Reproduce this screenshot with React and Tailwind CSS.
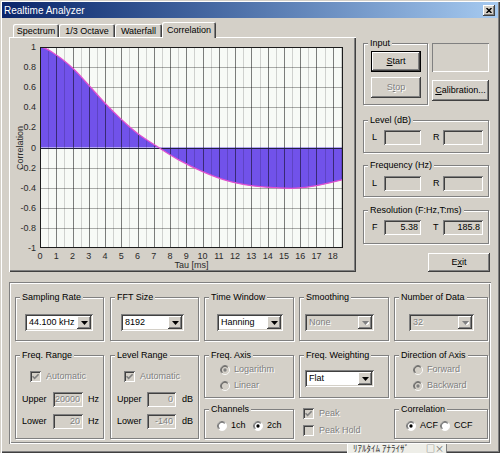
import React from 'react';

const raised =
  'bg-[#d4d0c8] shadow-[inset_-1px_-1px_#404040,inset_1px_1px_#fff,inset_-2px_-2px_#808080,inset_2px_2px_#d4d0c8]';
const sunken =
  'shadow-[inset_1px_1px_#808080,inset_-1px_-1px_#fff,inset_2px_2px_#404040,inset_-2px_-2px_#d4d0c8]';
const etched = 'border border-[#808080] shadow-[1px_1px_0_#fff,inset_1px_1px_0_#fff]';
const dis = 'text-[#808080] [text-shadow:1px_1px_0_#fff]';

// chart geometry, in page pixels
const X0 = 40;
const PX = 16.26;
const TMAX = 18.63;
const Y0 = 147.5;
const xOf = (t) => X0 + t * PX;
const yOf = (v) => Y0 - v * 100.5;

const KNOTS = [
  [0, 1], [1, 0.92], [2, 0.79], [3, 0.62], [4, 0.44], [5, 0.28], [6, 0.14], [7.3, 0],
  [8.5, -0.12], [10, -0.24], [11.5, -0.33], [13, -0.38], [14.5, -0.4], [15.7, -0.405],
  [17, -0.38], [18.63, -0.32],
];

function curvePath() {
  const p = KNOTS.map(([t, v]) => [xOf(t), yOf(v)]);
  let d = `M${p[0][0]},${p[0][1]}`;
  for (let i = 0; i < p.length - 1; i++) {
    const p0 = i === 0 ? [2 * p[0][0] - p[1][0], p[1][1]] : p[i - 1];
    const p1 = p[i];
    const p2 = p[i + 1];
    const p3 = p[i + 2] || p2;
    const c1 = [p1[0] + (p2[0] - p0[0]) / 6, p1[1] + (p2[1] - p0[1]) / 6];
    const c2 = [p2[0] - (p3[0] - p1[0]) / 6, p2[1] - (p3[1] - p1[1]) / 6];
    d += ` C${c1[0].toFixed(2)},${c1[1].toFixed(2)} ${c2[0].toFixed(2)},${c2[1].toFixed(2)} ${p2[0].toFixed(2)},${p2[1].toFixed(2)}`;
  }
  return d;
}

const Y_LABELS = ['1', '0.8', '0.6', '0.4', '0.2', '0', '-0.2', '-0.4', '-0.6', '-0.8', '-1'];

function Chart() {
  const curve = curvePath();
  const fill = `${curve} L${xOf(TMAX)},${Y0} L${X0},${Y0} Z`;
  const snap = (n) => Math.round(n) + 0.5;
  const halfs = [];
  for (let i = 1; i < 38; i++) halfs.push(i / 2);

  return (
    <svg width="347" height="235" viewBox="9 37 347 235" className="block">
      <defs>
        <clipPath id="plot">
          <rect x="40" y="47" width="303" height="201" />
        </clipPath>
      </defs>
      <rect x="40" y="47" width="303" height="201" fill="#f7faf6" />
      <g clipPath="url(#plot)">
        {[0.8, 0.6, 0.4, 0.2, -0.2, -0.4, -0.6, -0.8].map((v) => (
          <line key={v} x1="40" x2="343" y1={snap(yOf(v))} y2={snap(yOf(v))} stroke="#a9aba8" />
        ))}
        <path d={fill} fill="#7152ea" />
        {halfs.map((t) => (
          <line
            key={t}
            x1={snap(xOf(t))}
            x2={snap(xOf(t))}
            y1="47"
            y2="248"
            stroke="#000"
            strokeOpacity={t % 1 === 0 ? 0.5 : 0.16}
          />
        ))}
        <line x1="40" x2="343" y1={snap(Y0)} y2={snap(Y0)} stroke="#202040" />
        <path d={curve} fill="none" stroke="#e050d0" strokeWidth="1.3" />
      </g>
      <rect x="40.5" y="47.5" width="302" height="200" fill="none" stroke="#1c1c1c" />
      <g fontFamily="'Liberation Sans', Arial, sans-serif" fontSize="9" fill="#2a2a2a">
        {Y_LABELS.map((l, i) => (
          <text key={l} x="36" y={yOf(1 - i * 0.2) + 3} textAnchor="end">
            {l}
          </text>
        ))}
        {Array.from({ length: 19 }, (_, i) => (
          <text key={i} x={xOf(i)} y="258.5" textAnchor="middle">
            {i}
          </text>
        ))}
        <text x="191.5" y="268" textAnchor="middle">Tau [ms]</text>
        <text transform="translate(23,148) rotate(-90)" textAnchor="middle">Correlation</text>
      </g>
    </svg>
  );
}

function Group({ label, className = '', children }) {
  return (
    <fieldset className={`${etched} min-w-0 ${className}`}>
      <legend className="ml-[4px] px-[2px] bg-[#d4d0c8] leading-[12px]">{label}</legend>
      {children}
    </fieldset>
  );
}

function Arrow({ disabled }) {
  return (
    <svg width="7" height="4" viewBox="0 0 7 4" className="block">
      {disabled && <polygon points="1,1 8,1 4.5,5" fill="#fff" />}
      <polygon points="0,0 7,0 3.5,4" fill={disabled ? '#808080' : '#000'} />
    </svg>
  );
}

function Combo({ value, disabled, className = '' }) {
  return (
    <div className={`flex h-[17px] p-[2px] ${sunken} ${disabled ? 'bg-[#d4d0c8]' : 'bg-white'} ${className}`}>
      <div className={`flex-1 pl-[2px] leading-[13px] ${disabled ? dis : 'text-black'}`}>{value}</div>
      <div className={`w-[14px] flex items-center justify-center ${raised}`}>
        <Arrow disabled={disabled} />
      </div>
    </div>
  );
}

function Check({ checked, disabled, label, className = '' }) {
  return (
    <div className={`flex items-center h-[11px] ${className}`}>
      <div className={`w-[11px] h-[11px] flex items-center justify-center ${sunken} ${disabled ? 'bg-[#d4d0c8]' : 'bg-white'}`}>
        {checked && (
          <svg width="7" height="7" viewBox="0 0 7 7" className="block">
            <path d="M0.5 3.2 L2.6 5.3 L6.6 1.2" fill="none" stroke={disabled ? '#808080' : '#000'} strokeWidth="1.6" />
          </svg>
        )}
      </div>
      <span className={`ml-[5px] ${disabled ? dis : ''}`}>{label}</span>
    </div>
  );
}

function Radio({ checked, disabled, label, className = '' }) {
  return (
    <div className={`flex items-center h-[16px] ${className}`}>
      <svg width="10" height="10" viewBox="0 0 12 12" className="block shrink-0">
        <circle cx="6" cy="6" r="5.5" fill={disabled ? '#d4d0c8' : '#fff'} />
        <path d="M2.1 9.9 A5.5 5.5 0 0 1 9.9 2.1" stroke="#808080" fill="none" />
        <path d="M9.9 2.1 A5.5 5.5 0 0 1 2.1 9.9" stroke="#fff" fill="none" />
        <path d="M2.8 9.2 A4.5 4.5 0 0 1 9.2 2.8" stroke="#404040" fill="none" />
        {checked && <circle cx="6" cy="6" r="2" fill={disabled ? '#808080' : '#000'} />}
      </svg>
      <span className={`ml-[4px] ${disabled ? dis : ''}`}>{label}</span>
    </div>
  );
}

function Btn({ children, className = '', def, disabled }) {
  return (
    <div
      className={`flex items-center justify-center ${raised} ${def ? 'outline outline-1 outline-black -outline-offset-1 shadow-[inset_-2px_-2px_#404040,inset_2px_2px_#fff,inset_-3px_-3px_#808080]' : ''} ${disabled ? dis : ''} ${className}`}
    >
      {children}
    </div>
  );
}

function Field({ value, className = '', disabled }) {
  return (
    <div className={`h-[15px] bg-[#d4d0c8] ${sunken} text-right pr-[3px] leading-[15px] ${disabled ? dis : ''} ${className}`}>
      {value}
    </div>
  );
}

function Tab({ children, w, selected }) {
  return (
    <div
      className={`${w} rounded-t-[2px] bg-[#d4d0c8] text-center leading-[12px] ${
        selected
          ? 'relative z-10 h-[16px] -mb-[1px] pt-[2px] shadow-[inset_1px_1px_#fff,inset_-1px_0_#404040,inset_-2px_0_#808080]'
          : 'h-[13px] pt-[1px] shadow-[inset_1px_1px_#fff,inset_-1px_0_#404040,inset_-2px_0_#808080]'
      }`}
    >
      {children}
    </div>
  );
}

export default function App() {
  return (
    <div className="relative w-[500px] h-[453px] overflow-hidden bg-[#d4d0c8] p-[2px] text-[9px] text-black font-['Liberation_Sans',Arial,sans-serif] shadow-[inset_1px_1px_#d4d0c8,inset_2px_2px_#fff,inset_-1px_-1px_#404040,inset_-2px_-2px_#808080]">
      {/* title bar */}
      <div className="h-[16px] flex items-center justify-between bg-linear-to-r from-[#0a246a] to-[#a6caf0]">
        <span className="pl-[2px] text-white text-[10px]">Realtime Analyzer</span>
        <div className={`mr-[3px] w-[12px] h-[11px] flex items-center justify-center ${raised}`}>
          <svg width="6" height="5" viewBox="0 0 6 5" className="block">
            <path d="M0.5 0 L5.5 5 M5.5 0 L0.5 5" stroke="#000" strokeWidth="1.5" />
          </svg>
        </div>
      </div>

      <div className="flex mt-[2px]">
        {/* tab control */}
        <div className="ml-[7px] w-[347px] flex flex-col">
          <div className="h-[17px] flex items-end pl-[4px]">
            <Tab w="w-[46px]">Spectrum</Tab>
            <Tab w="w-[56px]">1/3 Octave</Tab>
            <Tab w="w-[47px]">Waterfall</Tab>
            <Tab w="w-[54px]" selected>Correlation</Tab>
          </div>
          <div className="h-[235px] bg-[#d4d0c8] shadow-[inset_1px_1px_#fff,inset_-1px_-1px_#404040,inset_-2px_-2px_#808080]">
            <Chart />
          </div>
        </div>

        {/* right column */}
        <div className="ml-[7px] mt-[17px] w-[126px] flex flex-col">
          <div className="flex">
            <Group label="Input" className="w-[65px] h-[68px]">
              <div className="pl-[7px] pt-[2px] flex flex-col gap-[5px]">
                <Btn def className="w-[50px] h-[21px]">
                  <span><span className="underline">S</span>tart</span>
                </Btn>
                <Btn disabled className="w-[50px] h-[21px]">
                  <span>S<span className="underline">t</span>op</span>
                </Btn>
              </div>
            </Group>
            <div className="ml-[4px] flex flex-col">
              <div className="mt-[6px] w-[57px] h-[29px] shadow-[inset_1px_1px_#808080,inset_-1px_-1px_#fff]" />
              <Btn className="mt-[8px] w-[57px] h-[21px]">
                <span><span className="underline">C</span>alibration...</span>
              </Btn>
            </div>
          </div>

          <Group label="Level (dB)" className="mt-[9px] w-[126px] h-[39px]">
            <div className="flex items-center pl-[8px] pt-[4px]">
              <span className="w-[12px]">L</span>
              <Field className="w-[37px]" />
              <span className="ml-[12px] w-[10px]">R</span>
              <Field className="w-[40px]" />
            </div>
          </Group>

          <Group label="Frequency (Hz)" className="mt-[6px] w-[126px] h-[38px]">
            <div className="flex items-center pl-[8px] pt-[5px]">
              <span className="w-[12px]">L</span>
              <Field className="w-[37px]" />
              <span className="ml-[12px] w-[10px]">R</span>
              <Field className="w-[40px]" />
            </div>
          </Group>

          <Group label="Resolution (F:Hz,T:ms)" className="mt-[7px] w-[126px] h-[40px]">
            <div className="flex items-center pl-[8px] pt-[4px]">
              <span className="w-[12px]">F</span>
              <Field className="w-[37px]" value="5.38" />
              <span className="ml-[12px] w-[10px]">T</span>
              <Field className="w-[40px]" value="185.8" />
            </div>
          </Group>

          <Btn className="ml-[65px] mt-[9px] w-[62px] h-[19px]">
            <span>E<span className="underline">x</span>it</span>
          </Btn>
        </div>
      </div>

      {/* bottom settings frame */}
      <div className="ml-[7px] mt-[10px] w-[482px] h-[162px] pt-[9px] pl-[6px] shadow-[inset_1px_1px_#808080,inset_-1px_-1px_#fff,inset_2px_2px_#fff,inset_-2px_-2px_#808080]">
        <div className="flex">
          <Group label="Sampling Rate" className="w-[89px] h-[50px]">
            <Combo value="44.100 kHz" className="ml-[9px] mt-[11px] w-[68px]" />
          </Group>
          <Group label="FFT Size" className="ml-[6px] w-[89px] h-[50px]">
            <Combo value="8192" className="ml-[10px] mt-[11px] w-[63px]" />
          </Group>
          <Group label="Time Window" className="ml-[5px] w-[90px] h-[50px]">
            <Combo value="Hanning" className="ml-[12px] mt-[11px] w-[66px]" />
          </Group>
          <Group label="Smoothing" className="ml-[5px] w-[90px] h-[50px]">
            <Combo value="None" disabled className="ml-[5px] mt-[11px] w-[69px]" />
          </Group>
          <Group label="Number of Data" className="ml-[5px] w-[94px] h-[50px]">
            <Combo value="32" disabled className="ml-[14px] mt-[11px] w-[65px]" />
          </Group>
        </div>

        <div className="flex mt-[8px]">
          <Group label="Freq. Range" className="w-[89px] h-[90px]">
            <Check checked disabled label="Automatic" className="ml-[14px] mt-[10px]" />
            <div className="flex items-center pl-[6px] mt-[10px]">
              <span className="w-[31px]">Upper</span>
              <Field value="20000" disabled className="w-[30px] pr-[2px]" />
              <span className="ml-[5px]">Hz</span>
            </div>
            <div className="flex items-center pl-[6px] mt-[7px]">
              <span className="w-[31px]">Lower</span>
              <Field value="20" disabled className="w-[30px] pr-[2px]" />
              <span className="ml-[5px]">Hz</span>
            </div>
          </Group>

          <Group label="Level Range" className="ml-[6px] w-[89px] h-[90px]">
            <Check checked disabled label="Automatic" className="ml-[13px] mt-[10px]" />
            <div className="flex items-center pl-[6px] mt-[10px]">
              <span className="w-[30px]">Upper</span>
              <Field value="0" disabled className="w-[29px] pr-[2px]" />
              <span className="ml-[6px]">dB</span>
            </div>
            <div className="flex items-center pl-[6px] mt-[7px]">
              <span className="w-[30px]">Lower</span>
              <Field value="-140" disabled className="w-[29px] pr-[2px]" />
              <span className="ml-[6px]">dB</span>
            </div>
          </Group>

          <div className="ml-[5px] w-[90px] flex flex-col">
            <Group label="Freq. Axis" className="w-[90px] h-[49px]">
              <div className="pl-[15px] pt-[1px]">
                <Radio checked disabled label="Logarithm" />
                <Radio disabled label="Linear" />
              </div>
            </Group>
            <Group label="Channels" className="mt-[5px] w-[90px] h-[36px]">
              <div className="flex pl-[12px] pt-[3px]">
                <Radio label="1ch" className="w-[36px]" />
                <Radio checked label="2ch" />
              </div>
            </Group>
          </div>

          <div className="ml-[5px] w-[90px] flex flex-col">
            <Group label="Freq. Weighting" className="w-[90px] h-[49px]">
              <Combo value="Flat" className="ml-[5px] mt-[9px] w-[69px]" />
            </Group>
            <div className="ml-[4px] mt-[10px] flex flex-col gap-[6px]">
              <Check checked disabled label="Peak" />
              <Check disabled label="Peak Hold" />
            </div>
          </div>

          <div className="ml-[5px] w-[94px] flex flex-col">
            <Group label="Direction of Axis" className="w-[94px] h-[49px]">
              <div className="pl-[18px] pt-[1px]">
                <Radio disabled label="Forward" />
                <Radio checked disabled label="Backward" />
              </div>
            </Group>
            <Group label="Correlation" className="mt-[5px] w-[94px] h-[36px]">
              <div className="flex pl-[11px] pt-[3px]">
                <Radio checked label="ACF" className="w-[34px]" />
                <Radio label="CCF" />
              </div>
            </Group>
          </div>
        </div>
      </div>

      {/* clipped IME / taskbar strip at the bottom edge */}
      <div className="absolute left-[347px] top-[443px] w-[100px] h-[14px] flex items-start bg-[#eeeee8] shadow-[inset_1px_1px_#fff,inset_-1px_0_#808080] pl-[6px] text-[9px] text-[#333] font-['Noto_Sans_CJK_JP',sans-serif] leading-[12px]">
        <span>ﾘｱﾙﾀｲﾑ ｱﾅﾗｲｻﾞ</span>
        <span className="ml-auto mr-[3px] text-[#666]">□×</span>
      </div>
    </div>
  );
}
